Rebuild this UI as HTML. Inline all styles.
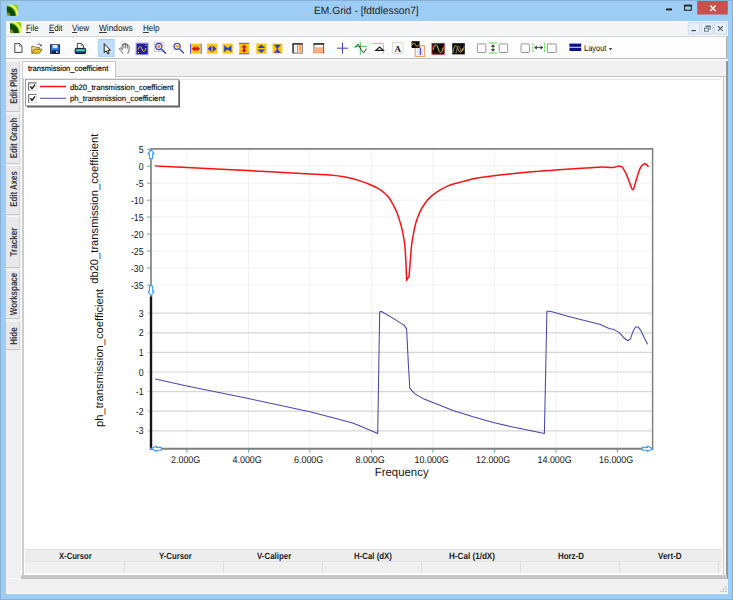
<!DOCTYPE html>
<html>
<head>
<meta charset="utf-8">
<title>EM.Grid - [fdtdlesson7]</title>
<style>
html,body{margin:0;padding:0;}
body{text-rendering:geometricPrecision;width:733px;height:600px;overflow:hidden;position:relative;background:#9dcdf4;font-family:"Liberation Sans",Arial,sans-serif;color:#000;}
.abs{position:absolute;}
.t{position:absolute;white-space:nowrap;line-height:1;transform-origin:0 50%;}
#frame{left:0;top:0;width:731px;height:598px;border:1px solid #86b0d6;background:#9dcdf4;}
#title{left:313.6px;top:5.6px;font-size:10.5px;color:#1c1c1c;transform:scaleX(0.975);}
#menubar{left:6px;top:21.4px;width:721.6px;height:14.4px;background:#f4f5f6;}
#toolbar{left:6px;top:35.8px;width:719.6px;height:20.9px;background:#fdfdfd;border-top:1.6px solid #d6d6d6;border-bottom:0.9px solid #bcbcbc;border-right:1px solid #b4b4b4;}
#client{left:6px;top:59px;width:721.7px;height:534.7px;background:#f0f0f0;border-bottom:0.9px solid #fbfbfb;border-left:0.9px solid #fbfbfb;box-sizing:border-box;}
.menu{font-size:9px;top:24.2px;color:#111;}
.menu u{text-decoration-thickness:0.7px;text-underline-offset:0.5px;text-decoration-color:#3a3a3a;}
.vtab{position:absolute;left:6.2px;width:14.2px;background:#e9e9e9;border-top:1px solid #f6f6f6;border-bottom:1.2px solid #c6c6c6;border-right:0.6px solid #d4d4d4;box-sizing:border-box;}
.vtab span{position:absolute;left:calc(52% + 2.1px);top:50%;white-space:nowrap;font-size:10px;font-weight:bold;color:#3c3c3c;line-height:1;transform:translate(-50%,-50%) rotate(-90deg);}
.hd{position:absolute;top:552px;font-size:9px;font-weight:bold;color:#1a1a1a;white-space:nowrap;line-height:1;transform-origin:0 50%;}
</style>
</head>
<body>
<div id="frame" class="abs"></div>
<div id="title" class="t">EM.Grid - [fdtdlesson7]</div>
<div id="menubar" class="abs"></div>
<div id="toolbar" class="abs"></div>
<div id="client" class="abs"></div>

<!-- menu -->
<span class="t menu" style="left:26.2px;transform:scaleX(0.862);"><u>F</u>ile</span>
<span class="t menu" style="left:48.5px;transform:scaleX(0.864);"><u>E</u>dit</span>
<span class="t menu" style="left:71.9px;transform:scaleX(0.884);"><u>V</u>iew</span>
<span class="t menu" style="left:99px;transform:scaleX(0.924);"><u>W</u>indows</span>
<span class="t menu" style="left:142.75px;transform:scaleX(0.896);"><u>H</u>elp</span>

<!-- left vertical tabs -->
<div class="vtab" style="top:60.5px;height:51.50px"><span style="top:24.90px;transform:translate(-50%,-50%) rotate(-90deg) scaleX(0.775)">Edit Plots</span></div>
<div class="vtab" style="top:113px;height:50.75px"><span style="top:23.95px;transform:translate(-50%,-50%) rotate(-90deg) scaleX(0.793)">Edit Graph</span></div>
<div class="vtab" style="top:165px;height:50.00px"><span style="top:22.80px;transform:translate(-50%,-50%) rotate(-90deg) scaleX(0.788)">Edit Axes</span></div>
<div class="vtab" style="top:216.25px;height:51.25px"><span style="top:24.32px;transform:translate(-50%,-50%) rotate(-90deg) scaleX(0.808)">Tracker</span></div>
<div class="vtab" style="top:269.5px;height:49.25px"><span style="top:23.95px;transform:translate(-50%,-50%) rotate(-90deg) scaleX(0.800)">Workspace</span></div>
<div class="vtab" style="top:320.5px;height:29.50px"><span style="top:14.20px;transform:translate(-50%,-50%) rotate(-90deg) scaleX(0.807)">Hide</span></div>

<!-- MDI child -->
<div class="abs" style="left:20.6px;top:60.8px;width:4.4px;height:514.4px;background:#fdfdfd"></div>
<div class="abs" style="left:22.3px;top:60.8px;width:1.4px;height:514.4px;background:#cdcdcd"></div>
<div class="abs" style="left:23.7px;top:60.8px;width:699.3px;height:514.4px;background:#fff"></div>
<div class="abs" style="left:723px;top:76.4px;width:1px;height:499px;background:#c8c8c8"></div>
<div class="abs" style="left:724px;top:60.8px;width:1.8px;height:515px;background:#f4f4f4"></div>
<div class="abs" style="left:725.8px;top:60.4px;width:1.8px;height:518.4px;background:#969696"></div>
<div class="abs" style="left:21.4px;top:575.1px;width:705.8px;height:3.8px;background:linear-gradient(#cbcbcb,#c6c6c6 60%,#bdbdbd)"></div>
<div class="abs" style="left:6.8px;top:577.7px;width:14.6px;height:0.9px;background:#fafafa"></div>
<!-- tab strip -->
<div class="abs" style="left:6px;top:59px;width:721.7px;height:1.8px;background:#f8f8f8"></div>
<div class="abs" style="left:23.4px;top:60.8px;width:702.4px;height:15.5px;background:#f0f0f0;border-bottom:0.9px solid #c4c4c4"></div>
<div class="abs" style="left:22.3px;top:60.6px;width:93.4px;height:17px;background:#fff;border:1px solid #c6c6c6;border-left:1.4px solid #c9c9c9;border-bottom:none;box-sizing:border-box"></div>
<span class="t" style="left:27.8px;top:65.4px;font-size:7.8px;color:#0a0a0a;-webkit-text-stroke:0.18px #0a0a0a;transform:scaleX(0.966)">transmission_coefficient</span>

<div class="abs" style="left:25px;top:79.2px;width:696.4px;height:0.9px;background:#e3e3e3"></div>
<!-- bottom table -->
<div class="abs" style="left:25px;top:549.4px;width:696.6px;height:11.2px;background:#ededed;border-top:1px solid #e2e2e2;box-sizing:border-box"></div>
<div class="abs" style="left:25px;top:560.6px;width:696.6px;height:12.6px;background:#f0f0f0;border-top:1px solid #e2e2e2;box-sizing:border-box"></div>
<div class="abs" style="left:123.8px;top:561.8px;width:1px;height:10.8px;background:#dedede"></div>
<div class="abs" style="left:222.9px;top:561.8px;width:1px;height:10.8px;background:#dedede"></div>
<div class="abs" style="left:322.0px;top:561.8px;width:1px;height:10.8px;background:#dedede"></div>
<div class="abs" style="left:421.1px;top:561.8px;width:1px;height:10.8px;background:#dedede"></div>
<div class="abs" style="left:520.2px;top:561.8px;width:1px;height:10.8px;background:#dedede"></div>
<div class="abs" style="left:619.3px;top:561.8px;width:1px;height:10.8px;background:#dedede"></div>
<div class="abs" style="left:718.4px;top:561.8px;width:1px;height:10.8px;background:#dedede"></div>
<span class="hd" style="left:58.8px;transform:scaleX(0.850)">X-Cursor</span>
<span class="hd" style="left:158.5px;transform:scaleX(0.865)">Y-Cursor</span>
<span class="hd" style="left:257.1px;transform:scaleX(0.877)">V-Caliper</span>
<span class="hd" style="left:353.8px;transform:scaleX(0.871)">H-Cal (dX)</span>
<span class="hd" style="left:449.4px;transform:scaleX(0.901)">H-Cal (1/dX)</span>
<span class="hd" style="left:557.8px;transform:scaleX(0.878)">Horz-D</span>
<span class="hd" style="left:658px;transform:scaleX(0.890)">Vert-D</span>

<!--PLOT-BEGIN-->
<svg class="abs" style="left:0;top:0" width="733" height="600" viewBox="0 0 733 600" font-family="Liberation Sans, Arial, sans-serif" text-rendering="geometricPrecision">
<!-- grid: top plot -->
<g stroke="#f1f1f1" stroke-width="1" fill="none">
<path d="M152 166.2H651.5M152 183.2H651.5M152 200.2H651.5M152 217.1H651.5M152 234.1H651.5M152 251H651.5M152 268H651.5M152 285H651.5"/>
<path d="M186.9 150V296M248.4 150V296M309.9 150V296M371.4 150V296M432.9 150V296M494.4 150V296M555.9 150V296M617.4 150V296"/>
<path d="M186.9 296V448M248.4 296V448M309.9 296V448M371.4 296V448M432.9 296V448M494.4 296V448M555.9 296V448M617.4 296V448"/>
</g>
<!-- grid: bottom plot -->
<g stroke="#d6d6d6" stroke-width="1.2" fill="none">
<path d="M147 313.1H651.5M147 332.8H651.5M147 352.4H651.5M147 372H651.5M147 391.6H651.5M147 411.2H651.5M147 430.8H651.5"/>
</g>
<!-- ticks top -->
<g stroke="#43aaa2" stroke-width="0.9" fill="none">
<path d="M147 149.3H151M147 166.2H151M147 183.2H151M147 200.2H151M147 217.1H151M147 234.1H151M147 251H151M147 268H151M147 285H151"/>
<path d="M186.9 449V452.8M248.4 449V452.8M309.9 449V452.8M371.4 449V452.8M432.9 449V452.8M494.4 449V452.8M555.9 449V452.8M617.4 449V452.8"/>
</g>
<!-- frame -->
<g fill="none">
<path d="M151 148.9H653.3" stroke="#858585" stroke-width="1.9"/>
<path d="M652.6 148.9V448.8" stroke="#808080" stroke-width="1.5"/>
<path d="M151 148V296.5" stroke="#8a8a8a" stroke-width="1.8"/>
<path d="M151 296.3V449.6" stroke="#161616" stroke-width="2.4"/>
<path d="M150 448.8H653.4" stroke="#808080" stroke-width="2"/>
</g>
<!-- curves -->
<path fill="none" stroke="#fa1212" stroke-width="1.5" stroke-linejoin="round" stroke-linecap="round" d="M155.5 165.8C156.4 165.9 155.8 166.0 161.0 166.3C166.2 166.6 172.3 166.9 186.9 167.6C201.5 168.3 227.9 169.5 248.4 170.6C268.9 171.7 296.3 173.2 309.9 173.9C323.5 174.7 324.1 174.6 330.0 175.1C335.9 175.6 340.1 176.1 345.1 177.1C350.1 178.1 355.7 179.6 360.1 180.9C364.5 182.2 368.5 184.0 371.4 185.2C374.3 186.4 375.6 186.9 377.7 188.2C379.8 189.4 382.1 191.1 384.0 192.7C385.9 194.3 387.6 195.8 389.0 197.7C390.4 199.6 391.4 201.7 392.7 204.0C393.9 206.3 395.2 208.4 396.5 211.5C397.8 214.6 399.2 219.2 400.3 222.8C401.4 226.4 402.1 229.1 402.8 232.9C403.6 236.7 404.3 240.8 404.8 245.4C405.3 250.0 405.5 254.7 405.8 260.5C406.1 266.4 406.5 277.2 406.6 280.5L409.1 276.0C409.3 273.4 409.9 265.6 410.3 260.5C410.7 255.4 411.0 250.4 411.6 245.4C412.2 240.4 413.3 234.5 414.1 230.3C414.9 226.1 415.6 223.6 416.6 220.3C417.7 217.1 418.9 213.7 420.4 210.8C421.9 207.9 423.5 205.2 425.4 202.7C427.3 200.2 429.6 197.8 431.7 195.9C433.8 194.0 435.2 193.1 437.9 191.4C440.6 189.7 444.2 187.5 448.0 185.9C451.8 184.3 456.7 183.2 460.5 182.1C464.3 181.0 467.2 180.2 470.6 179.4C474.0 178.7 476.4 178.2 480.6 177.6C484.8 177.0 490.1 176.3 495.7 175.6C501.3 174.9 507.4 174.3 514.0 173.6C520.6 172.9 528.2 172.2 535.1 171.6C542.0 171.0 546.8 170.7 555.2 170.1C563.6 169.5 577.3 168.6 585.3 168.1C593.2 167.6 598.3 167.2 602.9 167.1C607.5 167.0 610.6 167.7 612.9 167.6C615.2 167.5 615.5 166.8 616.5 166.6C617.5 166.3 618.4 166.1 619.2 166.1C620.0 166.1 620.6 166.3 621.2 166.6C621.8 166.9 622.1 166.7 623.0 168.1C623.9 169.5 625.5 172.2 626.7 175.1C628.0 177.9 629.5 182.8 630.5 185.2C631.5 187.6 632.2 190.1 633.0 189.7C633.8 189.3 634.7 185.2 635.5 182.6C636.3 180.0 637.2 176.4 638.0 173.9C638.8 171.4 639.7 169.2 640.5 167.6C641.3 166.0 642.2 165.2 643.0 164.6C643.8 164.0 644.4 163.8 645.0 163.8C645.6 163.8 646.1 164.2 646.6 164.6C647.1 165.0 647.9 166.0 648.1 166.3"/>
<path fill="none" stroke="#4848a8" stroke-width="1.05" stroke-linejoin="round" stroke-linecap="round" d="M155.5 379.1L186.9 386.1L248.4 398.6L309.9 411.7L334 418L352.6 423L360.1 426L377.7 433.5L379.7 311.8L381.5 311.5L392.8 318.1L404 325.1L406.6 328.9L408.3 362.7L409.8 388.4L415.3 394.1L422.9 398.4L432.9 402.4L453 410.4L473.1 416.7L493.2 422.5L514 427.3L527.6 430L544.4 433.5L546.9 311.3L550.2 311.3L567.7 316.3L600.4 324.6L609.1 328.4L614.2 329.6L619.2 332.6L624.2 338.2L628 340.7L630.5 338.9L633 331.4L635.5 327.1L638 326.9L640.5 330.1L644.3 337.7L647.5 343.9"/>
<!-- range markers -->
<g fill="#fff" stroke="#3c9cff" stroke-width="1.1" stroke-linejoin="round">
<path d="M151 149.4L154 154.1H152.6V158.7H149.4V154.1H148Z"/>
<path d="M151 296L154 291.2H152.6V286H149.4V291.2H148Z"/>
<path d="M151.4 448.8L156.2 446V447.4H161.2V450.2H156.2V451.6Z"/>
<path d="M652.5 448.8L647.5 446V447.4H642.2V450.2H647.5V451.6Z"/>
</g>
<!-- tick labels -->
<g font-size="10.2" fill="#151515" text-anchor="end">
<text transform="translate(143.6 152.95) scale(0.86 1)">5</text>
<text transform="translate(143.6 169.85) scale(0.86 1)">0</text>
<text transform="translate(143.6 186.85) scale(0.86 1)">-5</text>
<text transform="translate(143.6 203.85) scale(0.86 1)">-10</text>
<text transform="translate(143.6 220.75) scale(0.86 1)">-15</text>
<text transform="translate(143.6 237.75) scale(0.86 1)">-20</text>
<text transform="translate(143.6 254.65) scale(0.86 1)">-25</text>
<text transform="translate(143.6 271.65) scale(0.86 1)">-30</text>
<text transform="translate(143.6 288.65) scale(0.86 1)">-35</text>
<text transform="translate(143.6 316.75) scale(0.86 1)">3</text>
<text transform="translate(143.6 336.45) scale(0.86 1)">2</text>
<text transform="translate(143.6 356.05) scale(0.86 1)">1</text>
<text transform="translate(143.6 375.65) scale(0.86 1)">0</text>
<text transform="translate(143.6 395.25) scale(0.86 1)">-1</text>
<text transform="translate(143.6 414.85) scale(0.86 1)">-2</text>
<text transform="translate(143.6 434.45) scale(0.86 1)">-3</text>
</g>
<g font-size="9.8" fill="#151515" text-anchor="middle">
<text transform="translate(185.6 462.7) scale(0.91 1)">2.000G</text>
<text transform="translate(247.1 462.7) scale(0.91 1)">4.000G</text>
<text transform="translate(308.6 462.7) scale(0.91 1)">6.000G</text>
<text transform="translate(370.1 462.7) scale(0.91 1)">8.000G</text>
<text transform="translate(431.6 462.7) scale(0.91 1)">10.000G</text>
<text transform="translate(493.1 462.7) scale(0.91 1)">12.000G</text>
<text transform="translate(554.6 462.7) scale(0.91 1)">14.000G</text>
<text transform="translate(616.1 462.7) scale(0.91 1)">16.000G</text>
</g>
<text x="401.7" y="476" font-size="11.8" fill="#151515" text-anchor="middle" textLength="53.8" lengthAdjust="spacingAndGlyphs">Frequency</text>
<text transform="translate(98 283.8) rotate(-90)" font-size="11.2" fill="#111" textLength="150.2" lengthAdjust="spacingAndGlyphs">db20_transmission_coefficient</text>
<text transform="translate(103.1 427) rotate(-90)" font-size="11.2" fill="#111" textLength="138.2" lengthAdjust="spacingAndGlyphs">ph_transmission_coefficient</text>
<!-- legend -->
<rect x="26.8" y="80.6" width="153.2" height="26.9" fill="#3a3a3a" opacity="0.8"/>
<rect x="25.6" y="79.2" width="152.8" height="26.6" fill="#fff" stroke="#858585" stroke-width="0.8"/>
<g>
<rect x="28.6" y="82.8" width="7.8" height="7.8" fill="#fff" stroke="#dcdcdc" stroke-width="1"/>
<path d="M28.6 90.8V82.8H36.6" fill="none" stroke="#7c7c7c" stroke-width="1.2"/>
<rect x="28.6" y="94.5" width="7.8" height="7.8" fill="#fff" stroke="#dcdcdc" stroke-width="1"/>
<path d="M28.6 102.5V94.5H36.6" fill="none" stroke="#7c7c7c" stroke-width="1.2"/>
</g>
<path d="M30.4 86.4L32 88.6L35 84.6M30.4 98.1L32 100.3L35 96.3" fill="none" stroke="#111" stroke-width="1.3"/>
<path d="M39.8 86.5H66" stroke="#fa1212" stroke-width="1.5"/>
<path d="M39.8 98.3H66" stroke="#5a5ab4" stroke-width="1.1"/>
<g font-size="7.8" fill="#0a0a0a" stroke="#0a0a0a" stroke-width="0.15">
<text x="70" y="89.6" textLength="103.5" lengthAdjust="spacingAndGlyphs">db20_transmission_coefficient</text>
<text x="70" y="101.4" textLength="94.8" lengthAdjust="spacingAndGlyphs">ph_transmission_coefficient</text>
</g>
</svg>
<!--PLOT-END-->
<!--ICONS-BEGIN-->
<svg class="abs" style="left:0;top:0" width="733" height="600" viewBox="0 0 733 600" font-family="Liberation Sans, Arial, sans-serif" text-rendering="geometricPrecision">
<!-- app icons -->
<defs>
<radialGradient id="rg" cx="0" cy="1" r="1.3" fx="0" fy="1" gradientTransform="translate(0 1) scale(1 1.1) translate(0 -1)"><stop offset="0" stop-color="#a8ac40"/><stop offset="0.2" stop-color="#74881c"/><stop offset="0.27" stop-color="#3c6410"/><stop offset="0.32" stop-color="#0a4208"/><stop offset="0.56" stop-color="#0c580a"/><stop offset="0.63" stop-color="#7cbc18"/><stop offset="0.7" stop-color="#fbff78"/><stop offset="0.77" stop-color="#e8fa40"/><stop offset="0.86" stop-color="#7ccc10"/><stop offset="1" stop-color="#a4dc10"/></radialGradient>
</defs>
<rect x="6.8" y="4.8" width="11.3" height="11.1" fill="url(#rg)"/>
<rect x="10" y="22.1" width="11.3" height="11" fill="url(#rg)"/>
<!-- window buttons -->
<rect x="697.2" y="1" width="30.6" height="13.5" fill="#c9504e"/>
<path d="M710.2 5.5L715.6 10.9M715.6 5.5L710.2 10.9" stroke="#fff" stroke-width="1.35" fill="none"/>
<rect x="684.6" y="5.6" width="6.6" height="4.6" fill="#a8d2f4" stroke="#222" stroke-width="1.1"/>
<path d="M684 5.5H691.8" stroke="#222" stroke-width="1.8"/>
<rect x="666" y="8.5" width="6" height="1.9" fill="#1a1a1a"/>
<!-- mdi child buttons -->
<g fill="#e8f0fa" stroke="#c3d3e6" stroke-width="0.8">
<rect x="688.2" y="22.7" width="11.2" height="11.3"/>
<rect x="701.2" y="22.7" width="11.6" height="11.3"/>
<rect x="714.6" y="22.7" width="11.8" height="11.3"/>
</g>
<path d="M691.4 30.6H695.8" stroke="#2e3a48" stroke-width="1.1"/>
<g fill="none" stroke="#526378" stroke-width="0.8"><rect x="706" y="26" width="4.2" height="3"/><path d="M706 26.4H710.2" stroke-width="1.1"/><rect x="704.4" y="28.2" width="4" height="3" fill="#e8f0fa"/></g>
<path d="M718 26.2L722.8 31M722.8 26.2L718 31" stroke="#3b4a5a" stroke-width="1.05" fill="none"/>

<!-- selected tool bg -->
<rect x="98.3" y="39.4" width="15.8" height="17" fill="#c3defa" stroke="#a2cdf8" stroke-width="0.9"/>

<!-- new -->
<path d="M14.8 43.6H19.6L22 46V52.4H14.8Z" fill="#fff" stroke="#4a4a4a" stroke-width="1" stroke-linejoin="round"/>
<path d="M19.4 43.8V46.2H21.8" fill="none" stroke="#6a6a6a" stroke-width="0.8"/>
<!-- open -->
<path d="M31.8 53.2V46.4H34.6L35.6 47.4H39.6V49.4" fill="#f3e28a" stroke="#6e5c10" stroke-width="0.8" stroke-linejoin="round"/>
<path d="M31.8 53.2L34.4 49.2H42L39.4 53.2Z" fill="#f2c118" stroke="#6e5c10" stroke-width="0.8" stroke-linejoin="round"/>
<path d="M37.4 44.8C38.6 43.6 40.2 43.8 41 45.4" fill="none" stroke="#222" stroke-width="0.8"/>
<path d="M41.8 44.4L41.4 46.6L39.6 45.8Z" fill="#222"/>
<!-- save -->
<rect x="50.6" y="44.8" width="8.8" height="8.6" fill="#1f7ad6" stroke="#0c1a50" stroke-width="1"/>
<rect x="52.6" y="44.9" width="4.8" height="3.3" fill="#e6e6e6"/>
<rect x="52.2" y="50.4" width="6" height="3" fill="#1a1a3a"/>
<rect x="56.2" y="51.2" width="1.3" height="1.8" fill="#fff"/>
<!-- print -->
<path d="M77.4 48.6V43.4H81.4L83.6 45.6V48.6Z" fill="#fff" stroke="#333" stroke-width="0.9" stroke-linejoin="round"/>
<path d="M81.2 43.6V45.8H83.4" fill="none" stroke="#555" stroke-width="0.7"/>
<rect x="75.2" y="48.4" width="10.4" height="5.2" rx="0.8" fill="#2f5fc4" stroke="#10163c" stroke-width="1"/>
<rect x="76.2" y="49.2" width="8.4" height="1.8" fill="#3fcf96"/>
<rect x="75.8" y="52.4" width="9.2" height="1.2" fill="#10163c"/>
<!-- pointer -->
<path d="M104.2 43.6V52.6L106.2 50.8L107.8 54L109.2 53.4L107.7 50.3H110.4Z" fill="#fff" stroke="#202020" stroke-width="1" stroke-linejoin="round"/>
<!-- hand -->
<path d="M122.4 53.2L121.8 51.6L119.7 49.4C119 48.4 120.2 47.4 121 48.2L122.2 49.6V45C122.2 43.9 123.9 43.9 123.9 45V43.9C123.9 42.8 125.6 42.8 125.6 43.9V44.5C125.6 43.5 127.3 43.5 127.3 44.6V46.2C127.3 45.3 129.1 45.3 129.1 46.4C129.3 48.6 129.2 50.6 127.9 53.2" fill="#fff" stroke="#2e2e2e" stroke-width="0.75" stroke-linejoin="round" stroke-linecap="round"/>
<path d="M123.9 45V48M125.6 44.4V48M127.3 46V48.4" stroke="#3a3a3a" stroke-width="0.65" fill="none" stroke-linecap="round"/>
<!-- scope -->
<rect x="136.2" y="43.2" width="11.8" height="11.4" fill="#1d1d9e" stroke="#8d8de0" stroke-width="1.1"/>
<path d="M138.2 49.6C139 45.6 141 45.6 141.9 48.9C142.8 52.4 144.8 52.4 145.8 48" fill="none" stroke="#f4d020" stroke-width="1"/>
<g fill="#f4d020"><rect x="145.2" y="44.6" width="1.2" height="1.2"/><rect x="137.8" y="52" width="1.2" height="1.2"/></g>
<!-- zoom in -->
<rect x="154.4" y="42.3" width="9.6" height="9.2" fill="#fbfbfb" stroke="#c4c4c4" stroke-width="0.8"/>
<circle cx="158.8" cy="46.5" r="3.1" fill="#f9e4c4" stroke="#3a3ad6" stroke-width="1.15"/>
<circle cx="158.8" cy="46.6" r="1.3" fill="#f07a28"/>
<path d="M161.2 49L165.6 53.2" stroke="#3232c8" stroke-width="1.35" stroke-linecap="round"/>
<path d="M161 48.8L162.4 50.2" stroke="#38b038" stroke-width="1.3"/>
<!-- zoom out -->
<circle cx="177.1" cy="46.3" r="3.1" fill="#f9e4c4" stroke="#3a3ad6" stroke-width="1.15"/>
<rect x="175.5" y="45.6" width="3.2" height="1.3" fill="#f07a28"/>
<path d="M179.5 48.8L183.5 52.9" stroke="#3232c8" stroke-width="1.35" stroke-linecap="round"/>
<path d="M179.3 48.5L180.5 49.7" stroke="#58b838" stroke-width="1.2"/>
<!-- yellow icons -->
<g stroke="#ecdca0" stroke-width="0.5">
<rect x="191" y="43.8" width="9.7" height="9.9" fill="#fcc606"/>
<rect x="207" y="43.8" width="10.2" height="9.9" fill="#fcc606"/>
<rect x="222.6" y="43.8" width="10.2" height="9.9" fill="#fcc606"/>
<rect x="239.2" y="43.8" width="9.8" height="9.5" fill="#fcc606"/>
<rect x="256.2" y="43.6" width="10.2" height="10.2" fill="#fcc606"/>
<rect x="272.6" y="43.6" width="9.6" height="10.2" fill="#fcc606"/>
</g>
<g>
<path d="M190.5 43.6V53.9M201.2 43.6V53.9" stroke="#4c4ce0" stroke-width="0.9"/>
<path d="M191.7 48.8L195.2 46V51.6ZM200 48.8L196.5 46V51.6Z" fill="#d01818"/>
<path d="M194.6 48.8H197.2" stroke="#d01818" stroke-width="2.2"/>
<path d="M207.6 48.8L211.5 45.5V52.1ZM216.6 48.8L212.7 45.5V52.1Z" fill="#2a3ade"/>
<path d="M224.2 45.2L227 47.8H228.4L231.4 45.2V52.2L228.4 49.8H227L224.2 52.2Z" fill="#2a3ade"/>
<path d="M239 43.3H249.2M239 53.8H249.2" stroke="#3a3ad0" stroke-width="0.9"/>
<path d="M244.1 44.5L246.9 47.4H241.3ZM244.1 52.8L246.9 49.9H241.3Z" fill="#d01818"/>
<path d="M244.1 47V50.4" stroke="#d01818" stroke-width="2.2"/>
<path d="M261.3 44.5L265.2 48H257.4ZM261.3 53L265.2 49.5H257.4Z" fill="#2a3ade"/>
<path d="M274 44.8H280.8L278 48.2V49.4L280.8 52.8H274L276.8 49.4V48.2Z" fill="#2a3ade"/>
</g>
<!-- columns / rows -->
<rect x="293" y="44" width="9.2" height="9" fill="#fbfbfb" stroke="#4a4a4a" stroke-width="0.9"/>
<rect x="296.9" y="44.6" width="5.2" height="8.2" fill="#f9cfae"/>
<path d="M292.5 43.9H302.7" stroke="#2a2a2a" stroke-width="1.4"/>
<path d="M293.1 44V53" stroke="#2a2a2a" stroke-width="1.2"/>
<path d="M297.5 44.6V52.8M300.3 44.6V52.8" stroke="#ee8c48" stroke-width="1"/>
<path d="M295.3 44.6V52.6" stroke="#dedede" stroke-width="0.7"/>
<path d="M314 53.4V44H323.6V53.4" fill="#fbfbfb" stroke="#4a4a4a" stroke-width="0.9"/>
<rect x="314.6" y="47.4" width="8.4" height="5.9" fill="#f9cfae"/>
<path d="M313.5 43.9H324.1" stroke="#2a2a2a" stroke-width="1.5"/>
<path d="M314.6 48.1H323M314.6 50.3H323M314.6 52.5H323" stroke="#ee8c48" stroke-width="0.9"/>
<!-- plus -->
<path d="M337 48.2H348M342.5 42.6V53.8" stroke="#3a3ab4" stroke-width="0.95" fill="none"/>
<!-- green cross wave -->
<path d="M354.4 46.4H366.8M360.3 42V55" stroke="#3ccc68" stroke-width="1" fill="none"/>
<path d="M355.2 47.6L358 44.2L361.4 50L363.6 52.8L366.6 48.6" stroke="#222" stroke-width="0.9" fill="none"/>
<rect x="359.6" y="45.6" width="1.5" height="1.5" fill="#e06020"/>
<!-- magenta corner -->
<path d="M372.8 43.4H383.4V54" stroke="#f690f6" stroke-width="1" fill="none"/>
<path d="M375.8 50.4L379.6 47L383.4 50.4Z" fill="#fff" stroke="#1a1a1a" stroke-width="1.1"/>
<!-- A -->
<rect x="392.3" y="42.3" width="10.6" height="11.3" fill="#fff" stroke="#cdcdcd" stroke-width="0.7"/>
<text x="397.7" y="51.6" font-family="Liberation Serif, serif" font-weight="bold" font-size="9" text-anchor="middle" fill="#1a1a2a">A</text>
<!-- scope + column -->
<rect x="415.2" y="45.8" width="9.4" height="10.6" fill="#f4f4fb" stroke="#f09a58" stroke-width="1"/>
<path d="M420.4 47.6V55" stroke="#4a4ae0" stroke-width="1.4"/>
<path d="M417.6 47.6V55M422.6 47.6V55" stroke="#d8d8e6" stroke-width="0.7"/>
<rect x="411.6" y="41.2" width="8" height="6.8" fill="#0a0a0a"/>
<path d="M412.4 45C413 42.4 414.6 42.4 415.4 44.6C416.2 46.8 417.8 46.8 418.8 44.6" fill="none" stroke="#f0c818" stroke-width="0.9"/>
<!-- scope red -->
<rect x="432" y="43.4" width="12.2" height="10.8" fill="#0a0a0a" stroke="#c82020" stroke-width="1"/>
<path d="M433.2 49.6C434.4 43.4 437 43.4 438.2 48.8C439.4 54 442 54 443.2 47.4" fill="none" stroke="#e8d020" stroke-width="1"/>
<!-- scope double -->
<rect x="452.2" y="43.2" width="12.6" height="11.2" fill="#0a0a0a"/>
<path d="M456 53.6C457.2 46 459 44.6 460.2 48.6C461.4 53 463 52 464.2 46" fill="none" stroke="#a0a0a0" stroke-width="0.8"/>
<path d="M452.8 52.8C454 45 456.4 43.6 457.8 48.6C459 53 461.6 53.6 463 48" fill="none" stroke="#e8b818" stroke-width="1"/>
<!-- checkboxes -->
<g fill="#fff" stroke="#8c8c8c" stroke-width="0.9">
<rect x="477.4" y="43.9" width="8.4" height="8.6" rx="0.6"/>
<rect x="499.2" y="43.9" width="8.4" height="8.6" rx="0.6"/>
<rect x="521" y="43.9" width="8.4" height="8.6" rx="0.6"/>
<rect x="547.4" y="43.9" width="8.8" height="8.6" rx="0.6"/>
</g>
<path d="M488.8 43H497.2M488.8 53H497.2" stroke="#50e040" stroke-width="1"/>
<path d="M493 44.2L495.2 46.8H490.8ZM493 51.8L495.2 49.2H490.8Z" fill="#3a3a3a"/>
<path d="M493 46V50" stroke="#3a3a3a" stroke-width="0.9"/>
<path d="M533 43.2V52M544.4 43.2V52" stroke="#50e040" stroke-width="1" stroke-dasharray="2.4 0.8"/>
<path d="M534.2 47.6L536.8 45.4V49.8ZM543.2 47.6L540.6 45.4V49.8Z" fill="#3a3a3a"/>
<path d="M536 47.6H541.4" stroke="#3a3a3a" stroke-width="0.9"/>
<!-- layout -->
<rect x="569.4" y="43.6" width="11.8" height="3.2" fill="#10108a"/>
<rect x="569.4" y="47.7" width="11.8" height="3.3" fill="#10108a"/>
<text x="584" y="50.8" font-size="8.5" fill="#111" textLength="22.4" lengthAdjust="spacingAndGlyphs">Layout</text>
<path d="M608.6 48.2H612.4L610.5 50.2Z" fill="#222"/>
<!-- grip -->
<g fill="#b4b4b4"><rect x="725.2" y="590.8" width="1.3" height="1.3"/><rect x="722.8" y="590.8" width="1.3" height="1.3"/><rect x="720.4" y="590.8" width="1.3" height="1.3"/><rect x="725.2" y="588.4" width="1.3" height="1.3"/><rect x="722.8" y="588.4" width="1.3" height="1.3"/><rect x="725.2" y="586" width="1.3" height="1.3"/></g>
</svg>
<!--ICONS-END-->
</body>
</html>
